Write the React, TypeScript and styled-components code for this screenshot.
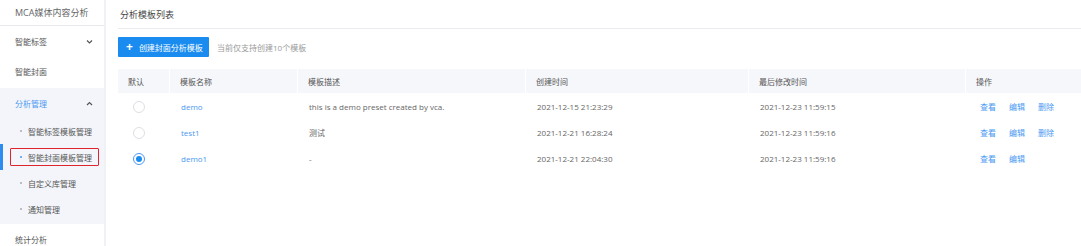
import React from "react";
import styled, { createGlobalStyle } from "styled-components";

const GlobalStyles = createGlobalStyle`
  html, body {
    margin: 0;
    padding: 0;
    background: #fff;
  }
  body {
    font-family: "Open Sans", "Noto Sans CJK SC", sans-serif;
    font-size: 8px;
    color: #666;
    overflow: hidden;
  }
`;

const blue = "#4a98f2";

type Row = {
  name: string;
  desc: string;
  created: string;
  modified: string;
  isDefault: boolean;
  canDelete: boolean;
};

const rows: Row[] = [
  {
    name: "demo",
    desc: "this is a demo preset created by vca.",
    created: "2021-12-15 21:23:29",
    modified: "2021-12-23 11:59:15",
    isDefault: false,
    canDelete: true
  },
  {
    name: "test1",
    desc: "测试",
    created: "2021-12-21 16:28:24",
    modified: "2021-12-23 11:59:16",
    isDefault: false,
    canDelete: true
  },
  {
    name: "demo1",
    desc: "-",
    created: "2021-12-21 22:04:30",
    modified: "2021-12-23 11:59:16",
    isDefault: true,
    canDelete: false
  }
];

const subItems = ["智能标签模板管理", "智能封面模板管理", "自定义库管理", "通知管理"];

const Chevron = (props: { up?: boolean }) => (
  <svg width="7" height="5" viewBox="0 0 7 5">
    <path
      d={props.up ? "M1 4 L3.5 1.5 L6 4" : "M1 1.5 L3.5 4 L6 1.5"}
      fill="none"
      stroke="#555"
      strokeWidth="1.2"
    />
  </svg>
);

const App = () => (
  <>
    <GlobalStyles />
    <Page>
      <Sidebar>
        <Brand>MCA媒体内容分析</Brand>
        <MenuItem>
          智能标签
          <Chevron />
        </MenuItem>
        <MenuItem>智能封面</MenuItem>
        <Group>
          <MenuItem active>
            分析管理
            <Chevron up />
          </MenuItem>
          {subItems.map((label, i) => (
            <SubItem key={label} selected={i === 1}>
              <SubLabel selected={i === 1}>
                <Dot selected={i === 1} />
                {label}
              </SubLabel>
            </SubItem>
          ))}
        </Group>
        <MenuItem>统计分析</MenuItem>
      </Sidebar>

      <Main>
        <Title>分析模板列表</Title>
        <Toolbar>
          <PrimaryButton>
            <Plus>+</Plus>创建封面分析模板
          </PrimaryButton>
          <Hint>当前仅支持创建10个模板</Hint>
        </Toolbar>

        <Table>
          <HeadCell>默认</HeadCell>
          <HeadCell>模板名称</HeadCell>
          <HeadCell>模板描述</HeadCell>
          <HeadCell>创建时间</HeadCell>
          <HeadCell>最后修改时间</HeadCell>
          <HeadCell last>操作</HeadCell>
          {rows.map(r => (
            <React.Fragment key={r.name}>
              <Cell>
                <Radio checked={r.isDefault} />
              </Cell>
              <Cell>
                <LinkText>{r.name}</LinkText>
              </Cell>
              <Cell>{r.desc}</Cell>
              <Cell>{r.created}</Cell>
              <Cell>{r.modified}</Cell>
              <Cell>
                <Actions>
                  <LinkText>查看</LinkText>
                  <LinkText>编辑</LinkText>
                  {r.canDelete && <LinkText>删除</LinkText>}
                </Actions>
              </Cell>
            </React.Fragment>
          ))}
        </Table>
      </Main>
    </Page>
  </>
);
export default App;

const Page = styled.div`
  display: flex;
  width: 1081px;
  height: 246px;
  overflow: hidden;
`;

const Sidebar = styled.nav`
  flex: 0 0 104px;
  display: flex;
  flex-direction: column;
  border-right: 2px solid #f0f1f4;
`;

const Brand = styled.div`
  height: 25px;
  display: flex;
  align-items: center;
  padding-left: 15px;
  font-size: 9px;
  color: #666;
  border-bottom: 1px solid #e8e9ec;
  flex-shrink: 0;
`;

const MenuItem = styled.div<{ active?: boolean }>`
  height: 30px;
  flex-shrink: 0;
  display: flex;
  align-items: center;
  justify-content: space-between;
  padding: 0 11px 0 15px;
  color: ${p => (p.active ? blue : "#555")};
`;

const Group = styled.div`
  background: #f3f5fa;
  padding-bottom: 2px;
  margin-top: 2px;
`;

const SubItem = styled.div<{ selected?: boolean }>`
  height: 26px;
  display: flex;
  align-items: center;
  padding-left: 10px;
  box-shadow: ${p => (p.selected ? `inset 3px 0 0 #2d8cf0` : "none")};
`;

const SubLabel = styled.div<{ selected?: boolean }>`
  display: flex;
  align-items: center;
  gap: 6px;
  height: 16px;
  padding: 0 6px 0 9px;
  color: #555;
  border: 1px solid ${p => (p.selected ? "#e0242b" : "transparent")};
  border-radius: 1px;
`;

const Dot = styled.span<{ selected?: boolean }>`
  width: 2px;
  height: 2px;
  border-radius: 50%;
  background: ${p => (p.selected ? blue : "#aaa")};
`;

const Main = styled.main`
  flex: 1;
  padding-left: 12px;
  display: flex;
  flex-direction: column;
`;

const Title = styled.div`
  height: 28px;
  display: flex;
  align-items: center;
  padding-left: 2px;
  font-size: 9px;
  color: #444;
  border-bottom: 1px solid #ebecef;
`;

const Toolbar = styled.div`
  display: flex;
  align-items: center;
  gap: 8px;
  margin-top: 8px;
`;

const PrimaryButton = styled.button`
  height: 20px;
  width: 91px;
  padding: 0 0 0 8px;
  border: none;
  border-radius: 1px;
  background: #1a8cf0;
  color: #fff;
  font: inherit;
  display: flex;
  align-items: center;
  gap: 6px;
`;

const Plus = styled.span`
  font-size: 12px;
  font-weight: bold;
  line-height: 1;
`;

const Hint = styled.span`
  color: #9a9a9a;
`;

const Table = styled.div`
  margin-top: 12px;
  display: grid;
  grid-template-columns: 52px 128px 228px 223px 217px 1fr;
`;

const HeadCell = styled.div<{ last?: boolean }>`
  height: 24px;
  display: flex;
  align-items: center;
  padding-left: 10px;
  background: #f5f7fb;
  color: #555;
  border-right: ${p => (p.last ? "none" : "1px solid #fff")};
`;

const Cell = styled.div`
  height: 26px;
  display: flex;
  align-items: center;
  padding-left: 11px;
  padding-top: 1px;
  box-sizing: border-box;
  color: #666;
  white-space: nowrap;
`;

const LinkText = styled.span`
  color: ${blue};
`;

const Actions = styled.div`
  display: flex;
  gap: 13px;
  margin-left: 3px;
`;

const Radio = styled.span<{ checked?: boolean }>`
  width: 10px;
  height: 10px;
  border-radius: 50%;
  border: 1px solid ${p => (p.checked ? blue : "#dcdfe6")};
  display: flex;
  align-items: center;
  justify-content: center;
  margin-left: 4px;

  &::after {
    content: "";
    width: 6px;
    height: 6px;
    border-radius: 50%;
    background: ${p => (p.checked ? "#1a8cf0" : "transparent")};
  }
`;
